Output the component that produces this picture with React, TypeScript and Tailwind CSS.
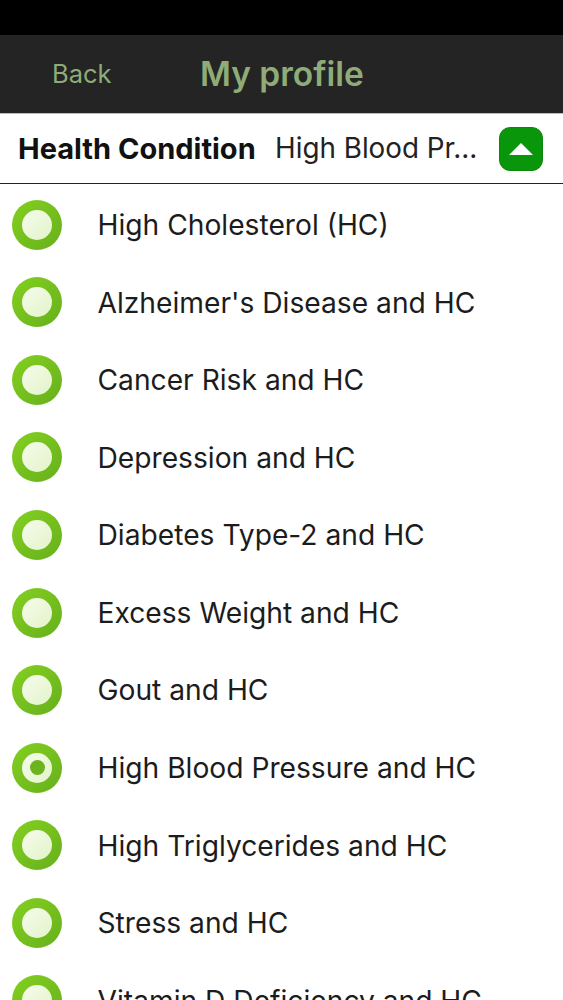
import React from 'react';

const conditions = [
  { name: 'High Cholesterol (HC)' },
  { name: "Alzheimer's Disease and HC" },
  { name: 'Cancer Risk and HC' },
  { name: 'Depression and HC' },
  { name: 'Diabetes Type-2 and HC' },
  { name: 'Excess Weight and HC' },
  { name: 'Gout and HC' },
  { name: 'High Blood Pressure and HC', selected: true },
  { name: 'High Triglycerides and HC' },
  { name: 'Stress and HC' },
  { name: 'Vitamin D Deficiency and HC' },
];

const Radio = ({ selected }: { selected?: boolean }) => (
  <div className="w-[50px] h-[50px] shrink-0 rounded-full bg-gradient-to-br from-[#84d020] to-[#66b01c] flex items-center justify-center">
    <div className="w-[30px] h-[30px] rounded-full bg-gradient-to-br from-[#f6fbec] to-[#e2f4c8] flex items-center justify-center">
      {selected && <div className="w-[15px] h-[15px] rounded-full bg-[#6cb41e]" />}
    </div>
  </div>
);

export default function App() {
  return (
    <div className="w-[563px] h-[1000px] overflow-hidden bg-white font-['Inter',sans-serif]">
      <div className="h-[35px] bg-black" />
      <div className="h-[78px] bg-[#242424] flex items-center text-[#8fab78]">
        <span className="ml-[52px] w-[148px] text-[25.5px]">Back</span>
        <span className="text-[33.5px] font-semibold">My profile</span>
      </div>
      <div className="h-[71px] flex items-center border-t border-[#bdbdbd] border-b-[1px] border-b-[#222]">
        <span className="ml-[18px] w-[257px] text-[29px] font-bold text-[#111] whitespace-nowrap">Health Condition</span>
        <span className="w-[224px] text-[27.8px] text-[#222] whitespace-nowrap">High Blood Pr...</span>
        <div className="w-[44px] h-[44px] rounded-[11px] bg-[#0a960a] border border-[#0c860c] flex items-center justify-center">
          <svg width="24" height="12" viewBox="0 0 24 12">
            <path d="M12 0 L24 12 L0 12 Z" fill="#fff" />
          </svg>
        </div>
      </div>
      <div className="pt-[2px]">
        {conditions.map(item => (
          <div key={item.name} className="h-[77.55px] flex items-center pl-[12px]">
            <Radio selected={item.selected} />
            <span className="ml-[35.5px] pt-[1px] text-[28.2px] text-[#1c1c1c] whitespace-nowrap">{item.name}</span>
          </div>
        ))}
      </div>
    </div>
  );
}
